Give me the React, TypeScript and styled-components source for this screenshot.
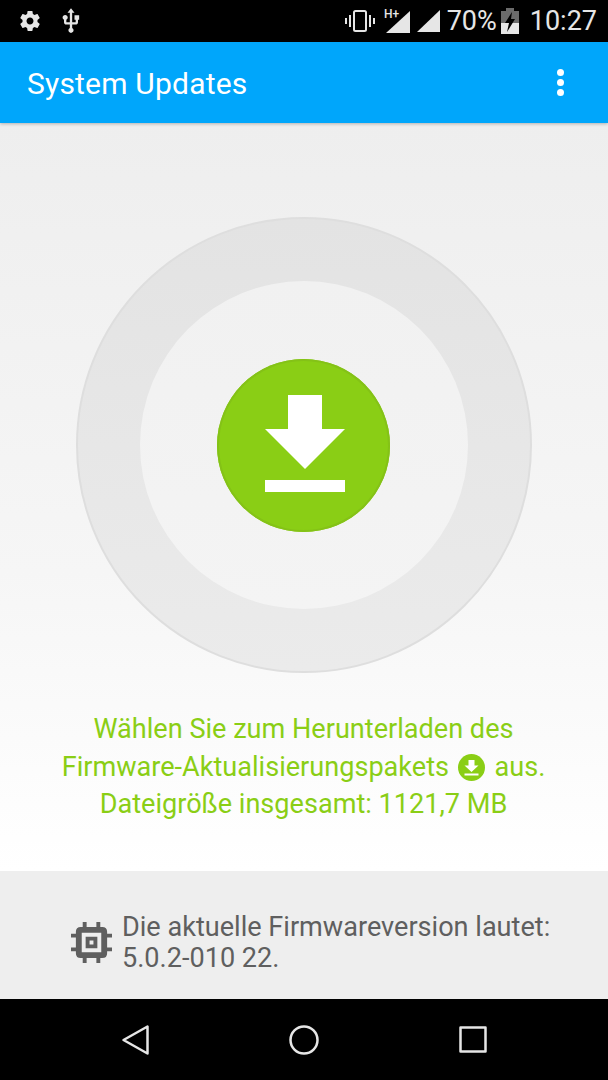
import React from "react";
import styled, { createGlobalStyle } from "styled-components";

const GlobalStyle = createGlobalStyle`
  html, body {
    margin: 0;
    padding: 0;
    background: #000;
  }
  body {
    font-family: Roboto, "Liberation Sans", sans-serif;
  }
`;

const Screen = styled.div`
  width: 608px;
  height: 1080px;
  display: flex;
  flex-direction: column;
  overflow: hidden;
`;

const StatusBar = styled.div`
  height: 42px;
  flex: none;
  background: #000;
  display: flex;
  align-items: center;
  justify-content: space-between;
  padding: 0 11px 0 18px;
  color: #e6e6e6;
`;

const StatusGroup = styled.div`
  display: flex;
  align-items: center;
`;

const StatusIcon = styled.svg<{ $left?: number }>`
  flex: none;
  display: block;
  margin-left: ${(p) => p.$left ?? 0}px;
`;

const StatusText = styled.span<{ $left?: number }>`
  font-size: 27px;
  line-height: 42px;
  margin-left: ${(p) => p.$left ?? 0}px;
`;

const AppBar = styled.div`
  height: 81px;
  flex: none;
  background: #00a6fb;
  display: flex;
  align-items: center;
  justify-content: space-between;
  padding: 0 44px 0 27px;
  box-shadow: 0 1px 3px rgba(0, 0, 0, 0.25);
  position: relative;
  z-index: 1;
`;

const Title = styled.div`
  color: #fff;
  font-size: 30px;
  line-height: 40px;
  letter-spacing: 0.2px;
  padding-top: 3px;
`;

const Dots = styled.div`
  display: flex;
  flex-direction: column;
  gap: 3px;
`;

const Dot = styled.span`
  width: 7px;
  height: 7px;
  border-radius: 50%;
  background: #fff;
`;

const Main = styled.div`
  height: 748px;
  flex: none;
  background: linear-gradient(#eeeeee, #f6f6f6 60%, #ffffff);
  display: flex;
  flex-direction: column;
  align-items: center;
  padding: 94px 1px 0 0;
  box-sizing: border-box;
`;

const Ring = styled.div`
  width: 456px;
  height: 456px;
  box-sizing: border-box;
  border-radius: 50%;
  background: linear-gradient(#e3e3e3, #ebebeb);
  border: 2px solid #dedede;
  display: flex;
  align-items: center;
  justify-content: center;
`;

const RingHole = styled.div`
  width: 328px;
  height: 328px;
  border-radius: 50%;
  background: linear-gradient(#f1f1f1, #f4f4f4);
  display: flex;
  align-items: center;
  justify-content: center;
`;

const DownloadButton = styled.div`
  width: 173px;
  height: 173px;
  flex: none;
  border-radius: 50%;
  background: #8ace15;
  box-shadow: inset 0 0 0 2px #84c217;
  display: flex;
`;

const Message = styled.div`
  margin-top: 38px;
  color: #8ace15;
  font-size: 27.1px;
  line-height: 37.5px;
  text-align: center;
  white-space: nowrap;
`;

const InlineIcon = styled.svg`
  display: inline-block;
  width: 27px;
  height: 27px;
  vertical-align: -5px;
  margin: 0 2.5px;
`;

const Footer = styled.div`
  height: 128px;
  flex: none;
  box-sizing: border-box;
  background: #eeeeee;
  display: flex;
  align-items: center;
  padding: 15px 0 0 71px;
  gap: 10px;
`;

const FooterText = styled.div`
  color: #5f5f5f;
  font-size: 27.1px;
  line-height: 31px;
  white-space: nowrap;
`;

const NavBar = styled.div`
  height: 81px;
  flex: none;
  background: #000;
  display: flex;
  align-items: center;
  justify-content: space-between;
  padding: 0 121px 0 122px;
  box-sizing: border-box;
`;

const App = () => (
  <>
    <GlobalStyle />
    <Screen>
      <StatusBar>
        <StatusGroup>
          <StatusIcon width="24" height="24" viewBox="0 0 24 24" fill="#e6e6e6">
            <path d="M19.43 12.98c.04-.32.07-.64.07-.98s-.03-.66-.07-.98l2.11-1.65c.19-.15.24-.42.12-.64l-2-3.46c-.12-.22-.39-.3-.61-.22l-2.49 1c-.52-.4-1.08-.73-1.69-.98l-.38-2.65C14.46 2.18 14.25 2 14 2h-4c-.25 0-.46.18-.49.42l-.38 2.65c-.61.25-1.17.59-1.69.98l-2.49-1c-.23-.09-.49 0-.61.22l-2 3.46c-.13.22-.07.49.12.64l2.11 1.65c-.04.32-.07.65-.07.98s.03.66.07.98l-2.11 1.65c-.19.15-.24.42-.12.64l2 3.46c.12.22.39.3.61.22l2.49-1c.52.4 1.08.73 1.69.98l.38 2.65c.03.24.24.42.49.42h4c.25 0 .46-.18.49-.42l.38-2.65c.61-.25 1.17-.59 1.69-.98l2.49 1c.23.09.49 0 .61-.22l2-3.46c.12-.22.07-.49-.12-.64l-2.11-1.65zM12 15.5c-1.93 0-3.5-1.57-3.5-3.5s1.57-3.5 3.5-3.5 3.5 1.57 3.5 3.5-1.57 3.5-3.5 3.5z" />
          </StatusIcon>
          <StatusIcon $left={15} width="28" height="28" viewBox="0 0 24 24" fill="#e6e6e6">
            <path d="M15 7v4h1v2h-3V5h2l-3-4-3 4h2v8H8v-2.07c.7-.37 1.2-1.08 1.2-1.93 0-1.21-.99-2.2-2.2-2.2-1.21 0-2.2.99-2.2 2.2 0 .85.5 1.56 1.2 1.93V13c0 1.11.89 2 2 2h3v3.05c-.71.37-1.2 1.1-1.2 1.95 0 1.22.99 2.2 2.2 2.2 1.21 0 2.2-.98 2.2-2.2 0-.85-.49-1.58-1.2-1.95V15h3c1.11 0 2-.89 2-2v-2h1V7h-4z" />
          </StatusIcon>
        </StatusGroup>
        <StatusGroup>
          <StatusIcon width="32" height="24" viewBox="0 0 32 24" fill="none" stroke="#e6e6e6" strokeWidth="2">
            <rect x="10" y="2" width="12" height="20" rx="1.5" />
            <path d="M6 6V18M26 6V18M2 9V15M30 9V15" />
          </StatusIcon>
          <StatusIcon $left={8} width="27" height="26" viewBox="0 0 27 26">
            <path d="M26 3V25H2Z" fill="#e6e6e6" />
            <text x="0" y="10" fontSize="12" fill="#e6e6e6" fontFamily="Roboto" fontWeight="500">H+</text>
          </StatusIcon>
          <StatusIcon $left={6} width="24" height="24" viewBox="0 0 24 24">
            <path d="M23 1V23H0Z" fill="#e6e6e6" />
          </StatusIcon>
          <StatusText $left={6}>70%</StatusText>
          <StatusIcon $left={4} width="18" height="28" viewBox="0 0 18 28">
            <path d="M5 1H13V4H18V27H0V4H5Z" fill="#6b6b6b" />
            <path d="M0 16H18V27H0Z" fill="#e6e6e6" />
            <path d="M11 5L4 16H8L6 25L14 12H10Z" fill="#000" />
          </StatusIcon>
          <StatusText $left={11}>10:27</StatusText>
        </StatusGroup>
      </StatusBar>

      <AppBar>
        <Title>System Updates</Title>
        <Dots>
          <Dot />
          <Dot />
          <Dot />
        </Dots>
      </AppBar>

      <Main>
        <Ring>
          <RingHole>
            <DownloadButton>
              <svg width="173" height="173" viewBox="0 0 173 173">
                <path d="M71 36H105V70H128L88 110 48 70H71Z" fill="#fff" />
                <rect x="48" y="121" width="80" height="12" fill="#fff" />
              </svg>
            </DownloadButton>
          </RingHole>
        </Ring>
        <Message>
          Wählen Sie zum Herunterladen des
          <br />
          Firmware-Aktualisierungspakets{" "}
          <InlineIcon viewBox="0 0 27 27">
            <circle cx="13.5" cy="13.5" r="13.5" fill="#8ace15" />
            <path d="M10.5 6H16.5V11.5H20.5L13.5 18 6.5 11.5H10.5Z" fill="#fff" />
            <rect x="6.5" y="19.5" width="14" height="2" fill="#fff" />
          </InlineIcon>{" "}
          aus.
          <br />
          Dateigröße insgesamt: 1121,7 MB
        </Message>
      </Main>

      <Footer>
        <svg width="41" height="41" viewBox="0 0 42 42" fill="#5f5f5f">
          <path
            fillRule="evenodd"
            d="M10 5H32Q37 5 37 10V32Q37 37 32 37H10Q5 37 5 32V10Q5 5 10 5ZM11 11V31H31V11Z"
          />
          <path fillRule="evenodd" d="M15 15H27V27H15ZM19 19V23H23V19Z" />
          <path d="M12 0H16V6H12ZM26 0H30V6H26ZM12 36H16V42H12ZM26 36H30V42H26ZM0 12H6V16H0ZM0 26H6V30H0ZM36 12H42V16H36ZM36 26H42V30H36Z" />
        </svg>
        <FooterText>
          Die aktuelle Firmwareversion lautet:
          <br />
          5.0.2-010 22.
        </FooterText>
      </Footer>

      <NavBar>
        <svg width="27" height="30" viewBox="0 0 27 30" fill="none" stroke="#e6e6e6" strokeWidth="2.5" strokeLinejoin="round">
          <path d="M25.5 1.5V28.5L1.5 15Z" />
        </svg>
        <svg width="30" height="30" viewBox="0 0 30 30" fill="none" stroke="#e6e6e6" strokeWidth="2.5">
          <circle cx="15" cy="15" r="13.5" />
        </svg>
        <svg width="28" height="27" viewBox="0 0 28 27" fill="none" stroke="#e6e6e6" strokeWidth="2.5" strokeLinejoin="round">
          <rect x="1.5" y="1.5" width="25" height="24" />
        </svg>
      </NavBar>
    </Screen>
  </>
);

export default App;
